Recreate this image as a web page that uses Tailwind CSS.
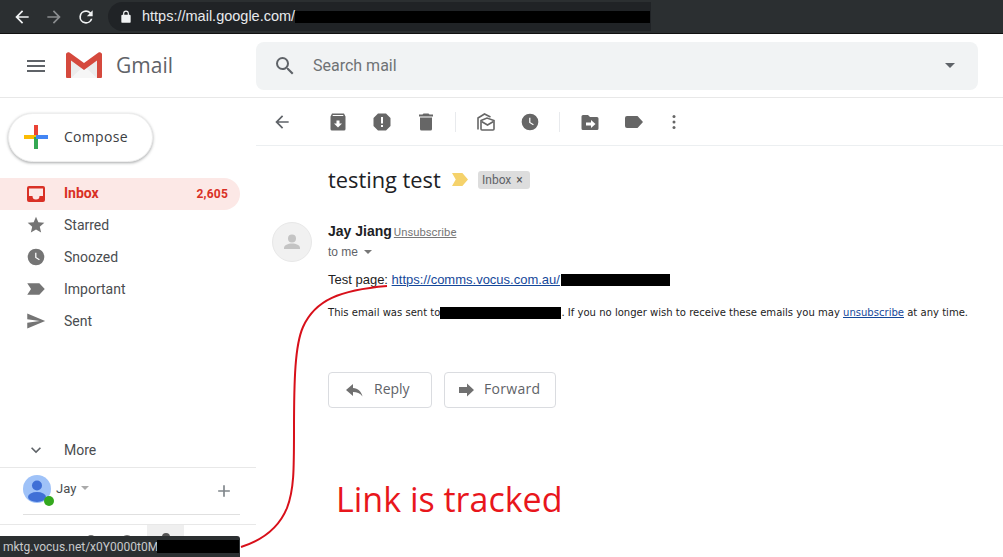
<!DOCTYPE html>
<html lang="en">
<head>
    <meta charset="UTF-8">
    <title>testing test - Gmail</title>
    <script src="https://cdn.jsdelivr.net/npm/@tailwindcss/browser@4"></script>
</head>
<body class="bg-white font-['Roboto',sans-serif] overflow-hidden">
<div class="relative w-[1003px] h-[557px] overflow-hidden">

    <!-- Browser bar -->
    <div class="h-[34px] bg-[#2b2f31] border-b border-[#111] flex items-center text-white">
        <svg class="w-[20px] h-[20px] ml-[12px]" viewBox="0 0 24 24" fill="#f1f3f4"><path d="M20 11H7.830l5.590-5.590L12 4l-8 8 8 8 1.410-1.410L7.830 13H20z"/></svg>
        <svg class="w-[20px] h-[20px] ml-[12px]" viewBox="0 0 24 24" fill="#8a8d8f"><path d="M12 4l-1.410 1.410L16.170 11H4v2h12.170l-5.580 5.590L12 20l8-8z"/></svg>
        <svg class="w-[20px] h-[20px] ml-[12px]" viewBox="0 0 24 24" fill="#f1f3f4"><path d="M17.650 6.350A7.960 7.960 0 0 0 12 4a8 8 0 1 0 7.730 10h-2.080A6 6 0 1 1 12 6c1.660 0 3.140.69 4.220 1.780L13 11h7V4z"/></svg>
        <div class="ml-[12px] h-[29px] w-[543px] rounded-l-full bg-[#202326] flex items-center">
            <svg class="w-[14px] h-[14px] ml-[11px]" viewBox="0 0 24 24" fill="#f1f3f4"><path d="M18 8h-1V6A5 5 0 0 0 7 6v2H6a2 2 0 0 0-2 2v10a2 2 0 0 0 2 2h12a2 2 0 0 0 2-2V10a2 2 0 0 0-2-2zM9 8V6a3 3 0 0 1 6 0v2z"/></svg>
            <span class="ml-[9px] text-[14.500px] text-[#e8eaed] whitespace-nowrap font-['Liberation_Sans',sans-serif]">https://mail.google.com/</span>
            <span class="w-[355px] h-[12px] bg-black shrink-0"></span>
        </div>
    </div>

    <!-- Gmail header -->
    <header class="h-[64px] border-b border-[#e8e8e8] flex items-center">
        <svg class="w-[24px] h-[24px] ml-[24px]" viewBox="0 0 24 24" fill="#5f6368"><path d="M3 18h18v-2H3zm0-5h18v-2H3zm0-7v2h18V6z"/></svg>
        <svg class="w-[36px] h-[27px] ml-[18px]" viewBox="0 0 36 27">
            <path d="M1 4 18 16 35 4v21a1 1 0 0 1-1 1H2a1 1 0 0 1-1-1z" fill="#ececec"/>
            <path d="M5 26 18 14l13 12z" fill="#f6f6f6"/>
            <path d="M0 2.500C0 .6 2 -.4 3.500.6L18 11 32.500.6C34 -.4 36 .6 36 2.500V25a1 1 0 0 1-1 1h-4V8.500L18 18 5 8.500V26H1a1 1 0 0 1-1-1z" fill="#d5493d"/>
        </svg>
        <span class="ml-[14px] w-[140px] text-[21px] text-[#5f6368] font-['Open_Sans',sans-serif] leading-none">Gmail</span>
        <div class="w-[722px] h-[48px] rounded-lg bg-[#f1f3f4] flex items-center">
            <svg class="w-[24px] h-[24px] ml-[17px]" viewBox="0 0 24 24" fill="#5f6368"><path d="M15.500 14h-.79l-.28-.27A6.470 6.470 0 0 0 16 9.500 6.500 6.500 0 1 0 9.500 16c1.610 0 3.090-.59 4.230-1.570l.27.28v.79l5 4.990L20.490 19zm-6 0C7.010 14 5 11.990 5 9.500S7.010 5 9.500 5 14 7.010 14 9.500 11.990 14 9.500 14z"/></svg>
            <span class="ml-[16px] text-[16px] text-[#6f7275]">Search mail</span>
            <span class="ml-auto mr-[23px] w-0 h-0 border-x-[5px] border-x-transparent border-t-[5px] border-t-[#5f6368]"></span>
        </div>
    </header>

    <div class="flex h-[459px]">
        <!-- Sidebar -->
        <aside class="w-[256px] shrink-0 flex flex-col">
            <div class="ml-[8px] mt-[15px] w-[145px] h-[49px] pb-[2px] rounded-full bg-white border border-[#eee] shadow-[0_1px_3px_rgba(60,64,67,0.45)] flex items-center">
                <svg class="w-[24px] h-[24px] ml-[15px]" viewBox="0 0 24 24">
                    <rect x="10" y="0" width="4" height="12" fill="#ea4335"/>
                    <rect x="0" y="10" width="12" height="4" fill="#fbbc04"/>
                    <rect x="10" y="12" width="4" height="12" fill="#34a853"/>
                    <rect x="12" y="10" width="12" height="4" fill="#4285f4"/>
                </svg>
                <span class="ml-[16px] text-[14px] font-medium tracking-[0.3px] text-[#3c4043] font-['Open_Sans',sans-serif]">Compose</span>
            </div>

            <nav class="mt-[16px] text-[14px] text-[#4a4d50]">
                <div class="w-[240px] h-[32px] rounded-r-full bg-[#fce8e6] flex items-center text-[#d93025] font-bold">
                    <svg class="w-[20px] h-[20px] ml-[26px]" viewBox="0 0 20 20" fill="#d93025"><path fill-rule="evenodd" d="M3 2h14a2 2 0 0 1 2 2v12a2 2 0 0 1-2 2H3a2 2 0 0 1-2-2V4a2 2 0 0 1 2-2zm0 2.500V12h3.500a3.500 3.500 0 0 0 7 0H17V4.500z"/></svg>
                    <span class="ml-[18px] pb-[2px]">Inbox</span>
                    <span class="ml-auto mr-[12px] text-[12px] tracking-[0.2px]">2,605</span>
                </div>
                <div class="h-[32px] pb-[2px] flex items-center">
                    <svg class="w-[20px] h-[20px] ml-[26px]" viewBox="0 0 24 24" fill="#757575"><path d="M12 17.270 18.180 21l-1.640-7.030L22 9.240l-7.190-.61L12 2 9.190 8.630 2 9.240l5.460 4.730L5.820 21z"/></svg>
                    <span class="ml-[18px]">Starred</span>
                </div>
                <div class="h-[32px] pb-[2px] flex items-center">
                    <svg class="w-[20px] h-[20px] ml-[26px]" viewBox="0 0 24 24" fill="#757575"><path fill-rule="evenodd" d="M12 2a10 10 0 1 0 0 20 10 10 0 0 0 0-20zm-1 5h1.500v5.200l4 2.400-.8 1.200L11 13z"/></svg>
                    <span class="ml-[18px]">Snoozed</span>
                </div>
                <div class="h-[32px] pb-[2px] flex items-center">
                    <svg class="w-[20px] h-[20px] ml-[26px]" viewBox="0 0 24 24" fill="#757575"><path d="M1.500 5H16l6.500 7-6.500 7H1.500L6 12z"/></svg>
                    <span class="ml-[18px]">Important</span>
                </div>
                <div class="h-[32px] pb-[2px] flex items-center">
                    <svg class="w-[20px] h-[20px] ml-[26px]" viewBox="0 0 24 24" fill="#757575"><path d="M1.500 21 23 12 1.500 3v7l15 2-15 2z"/></svg>
                    <span class="ml-[18px]">Sent</span>
                </div>
            </nav>

            <div class="mt-auto">
                <div class="h-[32px] flex items-center text-[14px] text-[#4a4d50]">
                    <svg class="w-[20px] h-[20px] ml-[26px]" viewBox="0 0 24 24" fill="#5f6368"><path d="M16.590 8.590 12 13.170 7.410 8.590 6 10l6 6 6-6z"/></svg>
                    <span class="ml-[18px]">More</span>
                </div>
                <div class="border-t border-[#e8e8e8] h-[57px] mt-[1px]">
                    <div class="ml-[23px] mr-[16px] h-[47px] border-b border-[#e0e0e0] flex">
                        <div class="relative w-[28px] h-[28px] mt-[7px] shrink-0">
                            <svg viewBox="0 0 28 28" class="w-[28px] h-[28px] rounded-full bg-[#9fc2f8]" fill="#3f6fd6"><circle cx="14" cy="10.500" r="5"/><ellipse cx="14" cy="22" rx="9" ry="5"/></svg>
                            <span class="absolute left-[21px] top-[21px] w-[10px] h-[10px] rounded-full bg-[#34a81e]"></span>
                        </div>
                        <span class="ml-[5px] mt-[11px] text-[13px] h-[18px] text-[#4a4d50]">Jay</span>
                        <span class="ml-[5px] mt-[18px] w-0 h-0 border-x-[4px] border-x-transparent border-t-[4px] border-t-[#aaa]"></span>
                        <svg class="ml-auto mt-[13px] mr-[6px] w-[20px] h-[20px]" viewBox="0 0 24 24" fill="#80868b"><path d="M19 13h-6v6h-2v-6H5v-2h6V5h2v6h6z"/></svg>
                    </div>
                </div>
                <!-- Hangouts tabs, mostly covered by the link tooltip -->
                <div class="border-t border-[#e8e8e8] h-[33px] flex">
                    <svg class="w-[147px] h-[32px]" viewBox="0 0 147 32" fill="#757575"><circle cx="91" cy="15" r="5"/><circle cx="127" cy="16" r="6"/></svg>
                    <div class="w-[37px] h-[32px] bg-[#efefef] flex justify-center pt-[8px]">
                        <span class="w-[8px] h-[8px] rounded-full bg-[#555]"></span>
                    </div>
                </div>
            </div>
        </aside>

        <!-- Message pane -->
        <main class="flex-1 min-w-0">
            <div class="h-[48px] border-b border-[#eceff1] flex items-center text-[#5f6368]">
                <svg class="w-[20px] h-[20px] ml-[16px]" viewBox="0 0 24 24" fill="#5f6368"><path d="M20 11H7.830l5.590-5.590L12 4l-8 8 8 8 1.410-1.410L7.830 13H20z"/></svg>
                <svg class="w-[20px] h-[20px] ml-[36px]" viewBox="0 0 20 20" fill="#666"><path fill-rule="evenodd" d="M4 1.500h12l1.500 3V17a1.500 1.500 0 0 1-1.500 1.500H4A1.500 1.500 0 0 1 2.500 17V4.500zm.5 2.500h11l-.4-1H4.900zM8.500 8.500v3H6l4 4 4-4h-2.500v-3z"/></svg>
                <svg class="w-[20px] h-[20px] ml-[24px]" viewBox="0 0 20 20" fill="#666"><path fill-rule="evenodd" d="M6 1.500h8L18.500 6v8L14 18.500H6L1.500 14V6zM9 5v6.500h2V5zm0 8v2h2v-2z"/></svg>
                <svg class="w-[20px] h-[20px] ml-[24px]" viewBox="0 0 20 20" fill="#666"><path d="M7.500 1.500h5l1 1H17v2H3v-2h3.500zM4 5.500h12V17a1.500 1.500 0 0 1-1.500 1.500h-9A1.500 1.500 0 0 1 4 17z"/></svg>
                <span class="ml-[19px] w-px h-[20px] bg-[#e8eaed]"></span>
                <svg class="w-[20px] h-[20px] ml-[20px]" viewBox="0 0 20 20" fill="none" stroke="#666" stroke-width="1.600"><path d="M2 17.500V6l6.500-4 6 3"/><path d="M5 8.500 11 6l7 2.500v8.500a1 1 0 0 1-1 1H6a1 1 0 0 1-1-1z" fill="#fff"/><path d="M5.500 9.500 11.500 13l6-3.500"/></svg>
                <svg class="w-[20px] h-[20px] ml-[24px]" viewBox="0 0 24 24" fill="#666"><path fill-rule="evenodd" d="M12 2a10 10 0 1 0 0 20 10 10 0 0 0 0-20zm-1 5h1.500v5.200l4 2.400-.8 1.200L11 13z"/></svg>
                <span class="ml-[19px] w-px h-[20px] bg-[#e8eaed]"></span>
                <svg class="w-[20px] h-[20px] ml-[20px]" viewBox="0 0 20 20" fill="#666"><path fill-rule="evenodd" d="M3 3h5l2 2h7a1.500 1.500 0 0 1 1.500 1.500v10A1.500 1.500 0 0 1 17 18H3a1.500 1.500 0 0 1-1.500-1.500v-12A1.500 1.500 0 0 1 3 3zm8 5v2.500H6v3h5V16l4.500-4z"/></svg>
                <svg class="w-[20px] h-[20px] ml-[24px]" viewBox="0 0 20 20" fill="#666"><path d="M3 4h10.500L19 10l-5.500 6H3a2 2 0 0 1-2-2V6a2 2 0 0 1 2-2z"/></svg>
                <svg class="w-[20px] h-[20px] ml-[20px]" viewBox="0 0 20 20" fill="#666"><circle cx="10" cy="4.500" r="1.500"/><circle cx="10" cy="10" r="1.500"/><circle cx="10" cy="15.500" r="1.500"/></svg>
            </div>

            <div class="pl-[72px]">
                <div class="flex items-center h-[34px] mt-[17px] pb-[1px]">
                    <h1 class="w-[124px] shrink-0 text-[21.800px] text-[#202124] font-['Open_Sans',sans-serif] leading-none whitespace-nowrap">testing test</h1>
                    <svg class="w-[16px] h-[13px]" viewBox="0 0 17 12" preserveAspectRatio="none" fill="#f5d26b"><path d="M0 0h11l6 6-6 6H0l4-6z"/></svg>
                    <span class="ml-[10px] w-[52px] h-[18px] pl-[4px] rounded-[3px] bg-[#dddddd] text-[12px] text-[#5f6368] flex items-center gap-[5px]">Inbox <span class="text-[12px] text-[#555]">×</span></span>
                </div>
            </div>

            <div class="flex mt-[24px] pl-[16px]">
                <div class="w-[40px] h-[40px] mt-[1px] rounded-full bg-[#f1f1f1] border border-[#e8e8e8] flex items-center justify-center shrink-0">
                    <svg class="w-[24px] h-[24px]" viewBox="0 0 24 24" fill="#c4c4c4"><circle cx="12" cy="8.500" r="4"/><path d="M4 18c0-3 4-4.500 8-4.500s8 1.500 8 4.500v1H4z"/></svg>
                </div>
                <div class="ml-[16px] font-['Liberation_Sans',sans-serif] min-w-0">
                    <div class="h-[18px] flex items-baseline">
                        <span class="text-[14px] font-bold text-[#202124]">Jay Jiang</span>
                        <span class="ml-[2px] text-[11.300px] text-[#777] underline font-['Roboto',sans-serif]">Unsubscribe</span>
                    </div>
                    <div class="h-[16px] mt-[5px] flex items-center text-[12px] text-[#5f6368]">
                        to me
                        <span class="ml-[6px] w-0 h-0 border-x-[4px] border-x-transparent border-t-[4px] border-t-[#777]"></span>
                    </div>
                    <div class="mt-[11px] h-[18px] flex items-center text-[13px] text-[#222] whitespace-nowrap">
                        Test page:&nbsp;<span class="text-[#15489a] underline">https://comms.vocus.com.au/</span><span class="ml-[1px] w-[109px] h-[12px] bg-black"></span>
                    </div>
                    <div class="mt-[17px] h-[14px] flex items-center text-[10.050px] text-[#222] whitespace-nowrap font-['DejaVu_Sans',sans-serif]">
                        This email was sent to<span class="w-[121px] h-[12px] bg-black"></span>. If you no longer wish to receive these emails you may&nbsp;<span class="text-[#15489a] underline">unsubscribe</span>&nbsp;at any time.
                    </div>
                    <div class="mt-[52px] flex gap-[12px] font-['Open_Sans',sans-serif]">
                        <div class="w-[104px] h-[36px] rounded border border-[#dadce0] flex items-center text-[14px] font-medium text-[#5f6368]">
                            <svg class="w-[20px] h-[20px] ml-[16px]" viewBox="0 0 20 20" fill="#707070"><path d="M8 4 1 10l7 6v-4c4 0 7 1 9.500 4.500C16.500 11.500 13 8.500 8 8z"/></svg>
                            <span class="ml-[9px] pb-[3px]">Reply</span>
                        </div>
                        <div class="w-[112px] h-[36px] rounded border border-[#dadce0] flex items-center text-[14px] font-medium text-[#5f6368]">
                            <svg class="w-[20px] h-[20px] ml-[11px]" viewBox="0 0 20 20" fill="#707070"><path d="M11 3.500 18 10l-7 6.500V13H3V7h8z"/></svg>
                            <span class="ml-[8px] pb-[3px] tracking-[0.3px]">Forward</span>
                        </div>
                    </div>
                </div>
            </div>
        </main>
    </div>

    <!-- Annotation laid over the screenshot -->
    <svg class="absolute left-0 top-0 w-[1003px] h-[557px] pointer-events-none" viewBox="0 0 1003 557" fill="none">
        <path d="M387 286C340 290 315 300 303 327C295 345 294 380 294 430C294 470 294 490 287 508C278 530 260 541 241 547" stroke="#d8101a" stroke-width="2"/>
    </svg>
    <span class="absolute left-[336px] top-[478px] text-[34px] leading-[42px] text-[#e8161c] font-['Open_Sans',sans-serif] whitespace-nowrap">Link is tracked</span>

    <div class="absolute left-0 top-[536px] w-[240px] h-[21px] rounded-tr-[3px] bg-[#2b2f31] flex items-center pl-[3px] text-[12px] text-[#c8cacc] whitespace-nowrap">
        mktg.vocus.net/x0Y0000t0M6<span class="absolute right-[1px] top-[4px] w-[82px] h-[13px] bg-black"></span>
    </div>
</div>
</body>
</html>
